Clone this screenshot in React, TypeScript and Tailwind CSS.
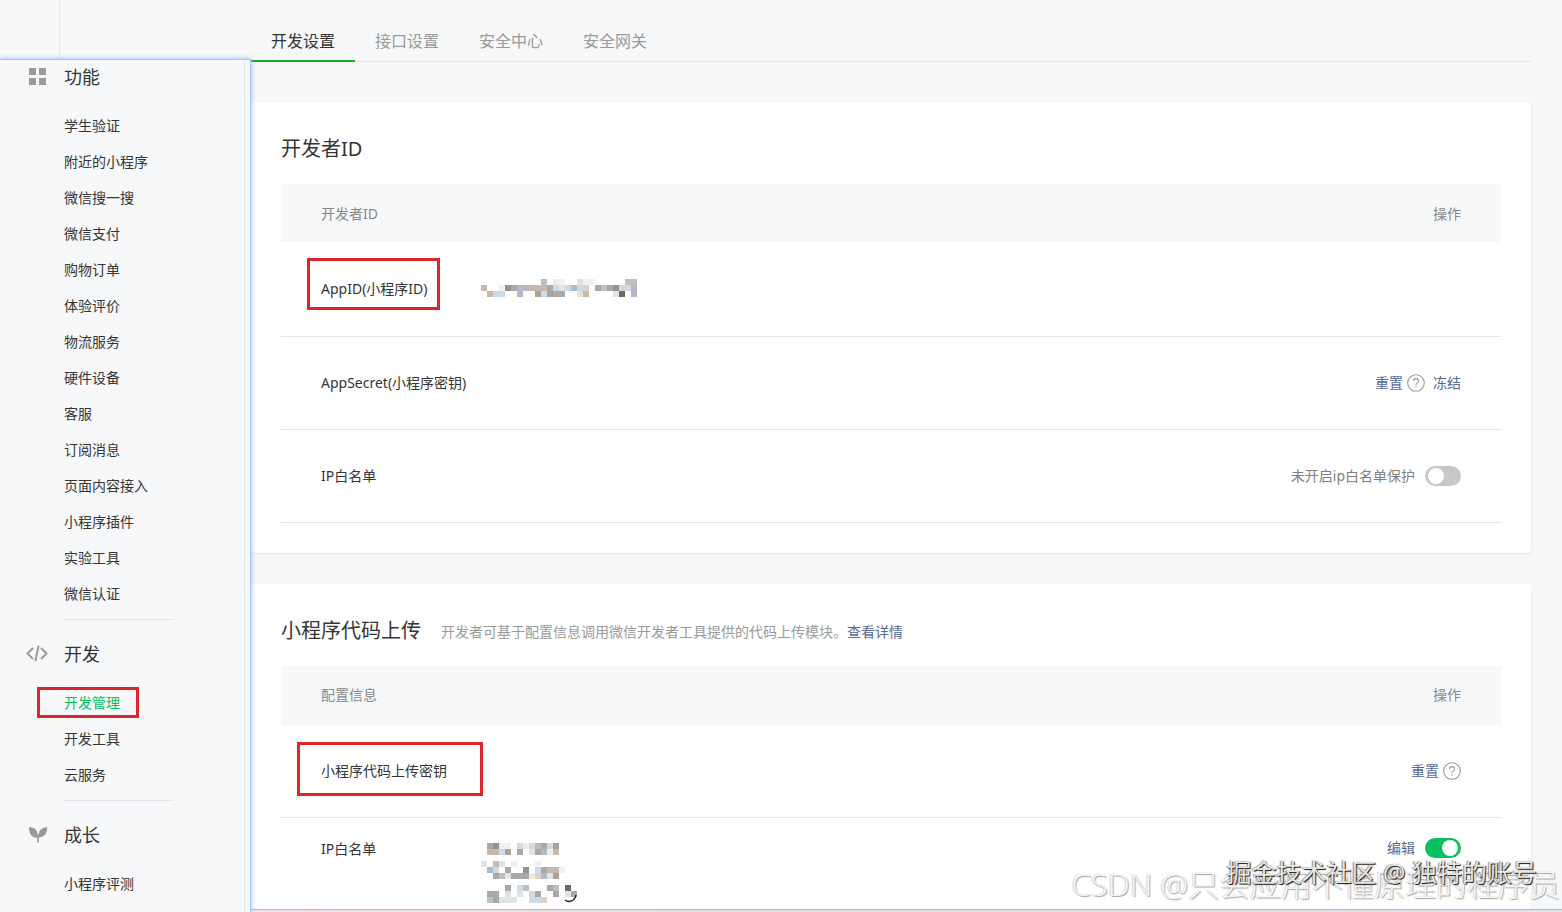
import type { ReactNode } from "react";

const tabs = ["开发设置", "接口设置", "安全中心", "安全网关"];

const featureItems = [
  "学生验证",
  "附近的小程序",
  "微信搜一搜",
  "微信支付",
  "购物订单",
  "体验评价",
  "物流服务",
  "硬件设备",
  "客服",
  "订阅消息",
  "页面内容接入",
  "小程序插件",
  "实验工具",
  "微信认证",
];

const menu = [
  { title: "功能", icon: <GridIcon />, items: featureItems },
  { title: "开发", icon: <CodeIcon />, items: ["开发管理", "开发工具", "云服务"] },
  { title: "成长", icon: <SproutIcon />, items: ["小程序评测"] },
];

// one letter per censored block, "." is empty
const palette: Record<string, string> = {
  l: "#f1f1f2",
  w: "#e3e3e3",
  g: "#a9a9aa",
  m: "#bfbfc0",
  d: "#939396",
  k: "#6a6a6e",
  t: "#c8b8aa",
  n: "#aba19a",
  e: "#e2d2c3",
  c: "#f0ece0",
  b: "#cddbe8",
  s: "#a9bccb",
  v: "#b6b7c9",
};

const appIdBlocks = [
  "..........m.cl..wll.....mm",
  "t..ldgvvtttgbwbsbe.gmgdebv",
  ".tbb..v..nbngg..wt....wk.v",
];

const ipBlocks = [
  ".gdll.bcbtgbn...",
  ".ttbn.g.wgsct...",
  "................",
  "w.mw.l...l......",
  ".sb.g..d.bgttl..",
  "..gmwgggceswn...",
  "................",
  "....g.bm...gm.k.",
  ".gg.w.w.bg..g.wg",
  ".mgwww..bbe.....",
];

function GridIcon() {
  return (
    <svg width="22" height="18" viewBox="0 0 22 18" fill="#9a9a9a">
      <path d="M3 0h7v7H3zM13 0h7v7h-7zM3 10h7v7H3zM13 10h7v7h-7z" />
    </svg>
  );
}

function CodeIcon() {
  return (
    <svg
      width="22"
      height="18"
      viewBox="0 0 22 18"
      fill="none"
      stroke="#9a9a9a"
      strokeWidth="2"
    >
      <path d="M7 3L1.500 8.500 7 14M15 3l5.500 5.500L15 14M12.600 0.800L9.400 16" />
    </svg>
  );
}

function SproutIcon() {
  return (
    <svg width="22" height="18" viewBox="0 0 22 18" fill="#9a9a9a">
      <path d="M3 1.200c5 0 8.500 2.500 8.500 7v3.600C6.500 11.800 3 9 3 1.200z" />
      <path d="M21.200 1.200c-5 .2-8.400 3-8.400 7.200v3.200c5.200-.4 8.400-3.600 8.400-10.400z" />
      <path d="M11.300 8h1.700v8.600h-1.700z" />
    </svg>
  );
}

function Mosaic({ rows, children }: { rows: string[]; children?: ReactNode }) {
  const width = rows[0].length * 6;
  const height = rows.length * 6;

  return (
    <svg
      width={width}
      height={height}
      viewBox={`0 0 ${width} ${height}`}
      shapeRendering="crispEdges"
      aria-hidden="true"
    >
      {rows.map((row, y) =>
        row
          .split("")
          .map((cell, x) =>
            cell === "." ? null : (
              <rect
                key={`${x}-${y}`}
                x={x * 6}
                y={y * 6}
                width="6"
                height="6"
                fill={palette[cell]}
              />
            ),
          ),
      )}
      {children}
    </svg>
  );
}

function HelpButton() {
  return (
    <button type="button" aria-label="帮助" className="ml-1 pt-px">
      <svg
        width="18"
        height="18"
        viewBox="0 0 18 18"
        fill="none"
        stroke="#9a9a9a"
        strokeWidth="1.1"
      >
        <circle cx="9" cy="9" r="8.300" />
        <path d="M6.500 7.200c0-1.600 1-2.600 2.500-2.600s2.500.9 2.500 2.300c0 1.900-2.500 2-2.500 4" />
        <path d="M9 12.200v1.400" />
      </svg>
    </button>
  );
}

function Toggle({ label, checked }: { label: string; checked?: boolean }) {
  return (
    <label className="ml-[10px] flex cursor-pointer">
      <input
        type="checkbox"
        role="switch"
        aria-label={label}
        defaultChecked={checked}
        className="peer sr-only"
      />
      <span className="flex h-5 w-9 items-center rounded-full bg-[#c8c8c8] px-[3px] peer-checked:justify-end peer-checked:bg-[#07c160]">
        <span className="h-4 w-4 rounded-full bg-white" />
      </span>
    </label>
  );
}

function ActionLink({ children }: { children: ReactNode }) {
  return (
    <a href="#" className="text-[#576b95]">
      {children}
    </a>
  );
}

function Sidebar() {
  return (
    <div className="relative z-10 flex w-[251px] flex-none flex-col">
      <div className="h-[59px] flex-none">
        <div className="h-full w-[60px] border-r border-[#e7e8eb]" />
      </div>
      <aside className="min-h-0 flex-1 border-t border-r border-[#a9c8f8] bg-[#f6f8f9] pr-[5px] shadow-[0_0_5px_#8ab6fb]">
        <nav className="h-full overflow-hidden border-r border-[#e4e6e9]">
          {menu.map((group, index) => (
            <section key={group.title}>
              {index > 0 && (
                <hr className="mt-[7px] mb-[17px] ml-16 w-[110px] border-[#e4e6e9]" />
              )}
              <h2 className="flex h-[34px] items-center gap-4 pl-[26px] text-lg text-[#353535]">
                {group.icon}
                {group.title}
              </h2>
              <ul className="mt-[14px]">
                {group.items.map((item) => (
                  <li key={item} className="flex h-9 items-center pl-16">
                    {item === "开发管理" ? (
                      <a href="#" className="relative text-[#07c160]">
                        {item}
                        <span className="absolute -top-[6px] -right-[19px] -bottom-[5px] -left-[27px] border-3 border-[#dc252c]" />
                      </a>
                    ) : (
                      <a href="#">{item}</a>
                    )}
                  </li>
                ))}
              </ul>
            </section>
          ))}
        </nav>
      </aside>
    </div>
  );
}

function Card({
  title,
  extra,
  heading,
  children,
}: {
  title: string;
  extra?: ReactNode;
  heading: string;
  children: ReactNode;
}) {
  return (
    <section className="rounded-sm bg-white px-[30px] pt-8 pb-[30px] shadow-[0_1px_2px_#dfe2e4]">
      <div className="mb-5 flex items-center gap-5">
        <h3 className="text-xl leading-[30px] text-[#353535]">{title}</h3>
        {extra}
      </div>
      <table className="w-full">
        <thead>
          <tr className="h-[59px] bg-[#f6f8f9] text-[#888888]">
            <th className="w-[200px] pl-10 text-left font-normal">{heading}</th>
            <td />
            <th className="pr-10 text-right font-normal">操作</th>
          </tr>
        </thead>
        <tbody>{children}</tbody>
      </table>
    </section>
  );
}

function Row({
  label,
  value,
  action,
}: {
  label: ReactNode;
  value?: ReactNode;
  action?: ReactNode;
}) {
  return (
    <tr className="h-[93px] border-b border-[#e4e5e7]">
      <th className="pl-10 text-left font-normal whitespace-nowrap">{label}</th>
      <td className="pb-[2px]">{value}</td>
      <td className="pr-10">
        <div className="flex items-center justify-end">{action}</div>
      </td>
    </tr>
  );
}

export default function App() {
  return (
    <div className="relative flex h-screen overflow-hidden bg-[#f6f8f9] font-['Noto_Sans','Noto_Sans_CJK_SC',sans-serif] text-sm leading-5 text-[#353535]">
      <Sidebar />

      <main className="min-w-0 flex-1 overflow-hidden pr-[31px]">
        <div className="flex h-[62px] border-b border-[#e4e6e9] pt-[21px] text-base">
          {tabs.map((tab, index) => (
            <button
              key={tab}
              type="button"
              className={
                index === 0
                  ? "-mb-px border-b-2 border-[#1aad19] px-5"
                  : "-mb-px border-b-2 border-transparent px-5 text-[#9a9a9a]"
              }
            >
              {tab}
            </button>
          ))}
        </div>

        <div className="mt-10 space-y-[31px]">
          <Card title="开发者ID" heading="开发者ID">
            <Row
              label={
                <span className="relative">
                  AppID(小程序ID)
                  <span className="absolute -top-[21px] -right-[12px] -bottom-[12px] -left-[14px] border-3 border-[#dc252c]" />
                </span>
              }
              value={<Mosaic rows={appIdBlocks} />}
            />
            <Row
              label="AppSecret(小程序密钥)"
              action={
                <>
                  <ActionLink>重置</ActionLink>
                  <HelpButton />
                  <span className="w-2" />
                  <ActionLink>冻结</ActionLink>
                </>
              }
            />
            <Row
              label="IP白名单"
              action={
                <>
                  <span className="text-[#7f7f7f]">未开启ip白名单保护</span>
                  <Toggle label="IP白名单保护" />
                </>
              }
            />
          </Card>

          <Card
            title="小程序代码上传"
            heading="配置信息"
            extra={
              <p className="pt-[2px] text-[#9a9a9a]">
                开发者可基于配置信息调用微信开发者工具提供的代码上传模块。
                <ActionLink>查看详情</ActionLink>
              </p>
            }
          >
            <Row
              label={
                <span className="relative">
                  小程序代码上传密钥
                  <span className="absolute -top-[19px] -right-[36px] -bottom-[16px] -left-[24px] border-3 border-[#dc252c]" />
                </span>
              }
              action={
                <>
                  <ActionLink>重置</ActionLink>
                  <HelpButton />
                </>
              }
            />
            <tr className="align-top">
              <th className="pt-[21px] pl-10 text-left font-normal">
                IP白名单
              </th>
              <td className="pt-[25px]">
                <Mosaic rows={ipBlocks}>
                  <path
                    d="M84 57c4 3 10 1 11-5"
                    fill="none"
                    stroke="#222222"
                    strokeWidth="1.500"
                    shapeRendering="auto"
                  />
                </Mosaic>
              </td>
              <td className="pt-5 pr-10">
                <div className="flex items-center justify-end">
                  <ActionLink>编辑</ActionLink>
                  <Toggle label="代码上传IP白名单" checked />
                </div>
              </td>
            </tr>
          </Card>
        </div>
      </main>

      <div className="pointer-events-none absolute right-[2px] bottom-2 text-[31px] leading-10 font-light whitespace-nowrap text-white/80 [text-shadow:1px_1px_1px_#a6a6a6,-1px_0_1px_#d6d6d6]">
        CSDN @只会应用不懂原理的程序员
      </div>
      <div className="pointer-events-none absolute right-[25px] bottom-5 text-[25px] leading-10 whitespace-nowrap text-[#e6e6e6] [text-shadow:1px_1px_1px_#111111,-1px_0_1px_#888888]">
        掘金技术社区 @ 独特的账号
      </div>
      <div className="absolute right-0 bottom-0 left-[251px] h-[3px] border-t border-[#b9b3c9] bg-linear-to-r from-[#f3dfe5] to-[#dfe3f0]" />
    </div>
  );
}
